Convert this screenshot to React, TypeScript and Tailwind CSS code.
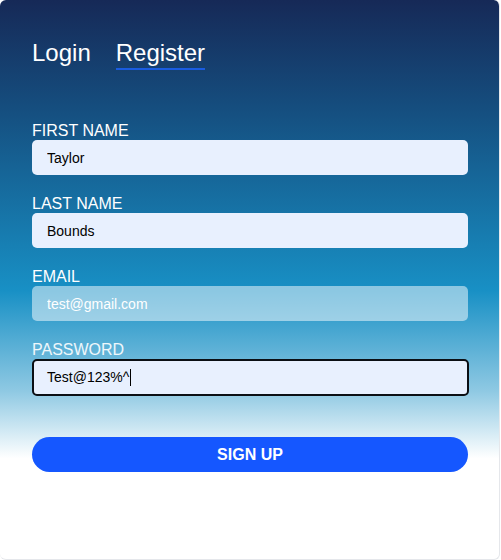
import React from 'react';

const fields = [
  { label: 'First Name', value: 'Taylor', tone: 'fill' },
  { label: 'Last Name', value: 'Bounds', tone: 'fill' },
  { label: 'Email', value: 'test@gmail.com', tone: 'glass' },
];

export default function App() {
  return (
    <div className="w-[501px] h-[560px] bg-white font-['Liberation_Sans',Arial,sans-serif]">
      <div className="w-[500px] h-[560px] rounded-md border-r border-b border-gray-200 bg-[linear-gradient(180deg,#162957_0%,#154f80_20%,#1890c5_52%,#8fc9e3_70%,#ffffff_82%,#ffffff_100%)] px-8 pt-[39px]">
        <div className="flex items-start gap-[25px] text-[24px] leading-[28px] text-white">
          <button className="pb-[3px]">Login</button>
          <button className="pb-px border-b-2 border-[#1a5ce0]">Register</button>
        </div>

        <form className="mt-[52px] flex flex-col gap-[20px]">
          {fields.map((f) => (
            <div key={f.label} className="flex flex-col">
              <label className="text-[16px] leading-[17px] uppercase text-white">{f.label}</label>
              <input
                readOnly
                value={f.value}
                className={
                  f.tone === 'glass'
                    ? 'mt-px h-[35px] w-[436px] rounded-[5px] bg-white/50 px-[15px] text-[14px] text-white outline-none'
                    : 'mt-px h-[35px] w-[436px] rounded-[5px] bg-[#e8f0fe] px-[15px] text-[14px] text-black outline-none'
                }
              />
            </div>
          ))}
          <div className="flex flex-col">
            <label className="text-[16px] leading-[17px] uppercase text-white/90">Password</label>
            <div className="mt-px flex h-[37px] w-[437px] items-center rounded-[5px] border-2 border-[#0b0f14] bg-[#e8f0fe] px-[13px] text-[14px] text-black">
              <span>Test@123%^</span>
              <span className="ml-px h-[17px] w-px bg-black" />
            </div>
          </div>
        </form>

        <button className="mt-[41px] h-[35px] w-[436px] rounded-full bg-[#1557ff] text-[16px] font-bold text-white">
          SIGN UP
        </button>
      </div>
    </div>
  );
}
